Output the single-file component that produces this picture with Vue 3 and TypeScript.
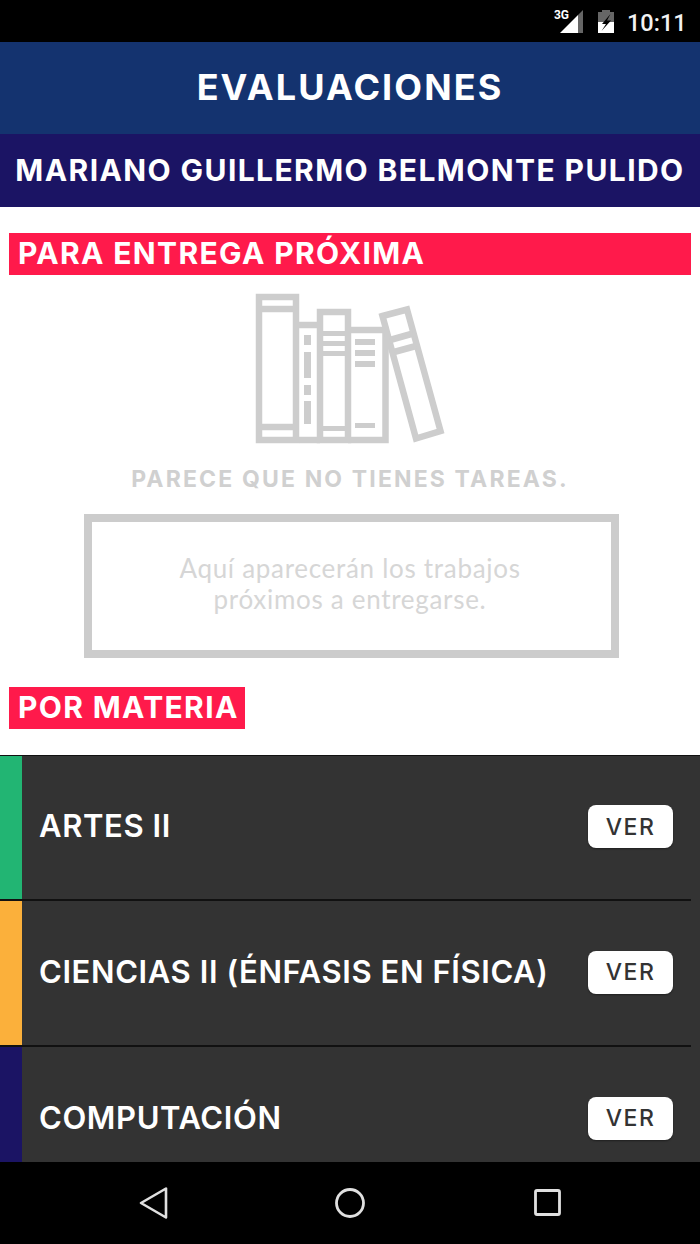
<script setup lang="ts">
interface Subject {
  name: string
  color: string
}

const subjects: Subject[] = [
  { name: 'ARTES II', color: '#22b573' },
  { name: 'CIENCIAS II (ÉNFASIS EN FÍSICA)', color: '#fbb03b' },
  { name: 'COMPUTACIÓN', color: '#1b1464' },
]
</script>

<template>
  <div class="phone">
    <div class="status-bar">
      <span class="net">3G</span>
      <svg class="signal" width="24" height="24" viewBox="0 0 24 24" aria-hidden="true">
        <path d="M0 23 L18 5 V23 Z" fill="#fff" />
        <path d="M18 5 L23 0 V23 H18 Z" fill="#666" />
      </svg>
      <svg class="battery" width="16" height="24" viewBox="0 0 16 24" aria-hidden="true">
        <path d="M4 0 H12 V2 H16 V23 H0 V2 H4 Z" fill="#666" />
        <path d="M0 12 H16 V23 H0 Z" fill="#fff" />
        <path d="M12.5 4 L4 14 H8 L3.5 21 L13 10.5 H9 Z" fill="#000" />
      </svg>
      <span class="clock">10:11</span>
    </div>

    <header class="title-bar">EVALUACIONES</header>
    <div class="name-bar">MARIANO GUILLERMO BELMONTE PULIDO</div>

    <main class="content">
      <h2 class="label label-wide">PARA ENTREGA PRÓXIMA</h2>

      <div class="empty">
        <svg class="books" width="240" height="170" viewBox="230 280 240 170" aria-hidden="true">
          <g fill="none" stroke="#cdcdcd" stroke-width="6.5">
            <rect x="259" y="297" width="37" height="143" />
            <path d="M259 309 H296 M259 427 H296" />
            <path d="M299 325 H320 M299 440 H320" />
            <rect x="320" y="312" width="28" height="128" />
            <path d="M320 333.5 H348 M320 343.5 H348 M320 353.5 H348 M320 428.5 H348" stroke-width="5" />
            <path d="M348 330 H385.5 V440 H348" />
            <path d="M382.5 316 L407 309.5 L440.5 431 L416 438.5 Z" />
            <path d="M390 340 L413 333.5 M394 352 L416 346" />
          </g>
          <g fill="#cdcdcd">
            <rect x="304" y="335" width="7" height="10" />
            <rect x="304" y="352" width="7" height="26" />
            <rect x="304" y="385" width="7" height="10" />
            <rect x="304" y="401" width="7" height="23" />
            <rect x="355" y="339" width="20" height="6" />
            <rect x="355" y="350" width="20" height="6" />
            <rect x="355" y="361" width="20" height="6" />
            <rect x="355" y="423" width="20" height="5" />
          </g>
        </svg>
        <p class="empty-title">PARECE QUE NO TIENES TAREAS.</p>
        <div class="empty-box">
          <p>Aquí aparecerán los trabajos<br />próximos a entregarse.</p>
        </div>
      </div>

      <h2 class="label label-short">POR MATERIA</h2>

      <section class="subjects">
        <div v-for="subject in subjects" :key="subject.name" class="subject">
          <div class="subject-row">
            <span class="stripe" :style="{ background: subject.color }"></span>
            <span class="subject-name">{{ subject.name }}</span>
            <button class="ver" type="button">VER</button>
          </div>
          <div class="rule"></div>
        </div>
      </section>
    </main>

    <nav class="nav-bar">
      <svg width="30" height="34" viewBox="0 0 30 34" aria-hidden="true">
        <path d="M2 17 L27 2.5 V31.5 Z" fill="none" stroke="#e0e0e0" stroke-width="2.6" stroke-linejoin="round" />
      </svg>
      <svg width="32" height="32" viewBox="0 0 32 32" aria-hidden="true">
        <circle cx="16" cy="16" r="13.5" fill="none" stroke="#e0e0e0" stroke-width="2.8" />
      </svg>
      <svg width="28" height="28" viewBox="0 0 28 28" aria-hidden="true">
        <rect x="1.5" y="1.5" width="24" height="24" rx="1.5" fill="none" stroke="#e0e0e0" stroke-width="2.8" />
      </svg>
    </nav>
  </div>
</template>

<style>
html,
body {
  margin: 0;
  background: #fff;
}
</style>

<style scoped>
.phone {
  width: 700px;
  height: 1244px;
  display: flex;
  flex-direction: column;
  overflow: hidden;
  font-family: Inter, "Liberation Sans", sans-serif;
}

.status-bar {
  height: 42px;
  flex: none;
  background: #000;
  display: flex;
  align-items: flex-start;
  color: #fff;
}

.net {
  margin: 9px 0 0 554px;
  width: 16px;
  font: 700 12px/12px Roboto, sans-serif;
  letter-spacing: -0.2px;
}

.signal {
  margin: 10px 0 0 -10px;
}

.battery {
  margin: 10px 0 0 14px;
}

.clock {
  margin: 8px 0 0 13px;
  font: 500 23.5px/30px Roboto, sans-serif;
  color: #f2f2f2;
}

.title-bar {
  height: 92px;
  box-sizing: border-box;
  padding-bottom: 2px;
  flex: none;
  background: #14336f;
  color: #fff;
  display: flex;
  align-items: center;
  justify-content: center;
  font-size: 36px;
  font-weight: 700;
  letter-spacing: 2.1px;
}

.name-bar {
  height: 73px;
  box-sizing: border-box;
  padding-bottom: 2px;
  flex: none;
  background: #1b1464;
  color: #fff;
  display: flex;
  align-items: center;
  justify-content: center;
  font-size: 30px;
  font-weight: 700;
  letter-spacing: 1.41px;
  white-space: nowrap;
}

.content {
  flex: 1;
  min-height: 0;
  overflow: hidden;
  background: #fff;
}

.label {
  margin: 0 0 0 9px;
  height: 42px;
  box-sizing: border-box;
  padding-left: 9px;
  background: #ff1a4b;
  color: #fff;
  font-size: 30px;
  font-weight: 700;
  letter-spacing: 1.35px;
  line-height: 40px;
  white-space: nowrap;
}

.label-wide {
  margin-top: 26px;
  width: 682px;
}

.label-short {
  margin-top: 29px;
  width: 236px;
}

.empty {
  display: flex;
  flex-direction: column;
  align-items: center;
}

.books {
  display: block;
  margin-top: 5px;
}

.empty-title {
  margin: 14px 0 0;
  height: 30px;
  color: #d0d0d0;
  font-size: 23px;
  font-weight: 700;
  letter-spacing: 2.15px;
  line-height: 30px;
}

.empty-box {
  margin: 20px 0 0 2px;
  width: 535px;
  height: 144px;
  box-sizing: border-box;
  border: 8px solid #cccccc;
  display: flex;
  align-items: center;
  justify-content: center;
}

.empty-box p {
  margin: 0 0 4px -2px;
  color: #d6d6d6;
  font-family: Lato, sans-serif;
  font-size: 26px;
  font-weight: 400;
  letter-spacing: 0.7px;
  line-height: 31px;
  text-align: center;
}

.subjects {
  margin-top: 26px;
  border-top: 1px solid #111;
  background: #333;
}

.subject-row {
  height: 143px;
  box-sizing: border-box;
  padding-bottom: 2px;
  display: flex;
  align-items: center;
}

.subject + .subject .subject-row {
  height: 144px;
}

.stripe {
  align-self: stretch;
  width: 22px;
  flex: none;
  margin-bottom: -2px;
}

.subject-name {
  margin-left: 17px;
  padding-bottom: 2px;
  flex: 1;
  color: #fff;
  font-size: 31px;
  font-weight: 600;
  letter-spacing: 0.6px;
  white-space: nowrap;
}

.ver {
  margin-right: 27px;
  width: 85px;
  height: 43px;
  border: 0;
  border-radius: 8px;
  background: #fff;
  box-shadow: 0 1px 2px rgba(0, 0, 0, 0.4);
  color: #333;
  font-family: inherit;
  font-size: 23px;
  font-weight: 500;
  letter-spacing: 1.5px;
  padding: 0;
}

.rule {
  height: 2px;
  margin-right: 9px;
  background: #111;
}

.nav-bar {
  height: 82px;
  flex: none;
  background: #000;
  display: flex;
  align-items: center;
  padding-left: 139px;
}

.nav-bar svg:nth-child(2) {
  margin-left: 165px;
}

.nav-bar svg:nth-child(3) {
  margin-left: 168px;
}
</style>
